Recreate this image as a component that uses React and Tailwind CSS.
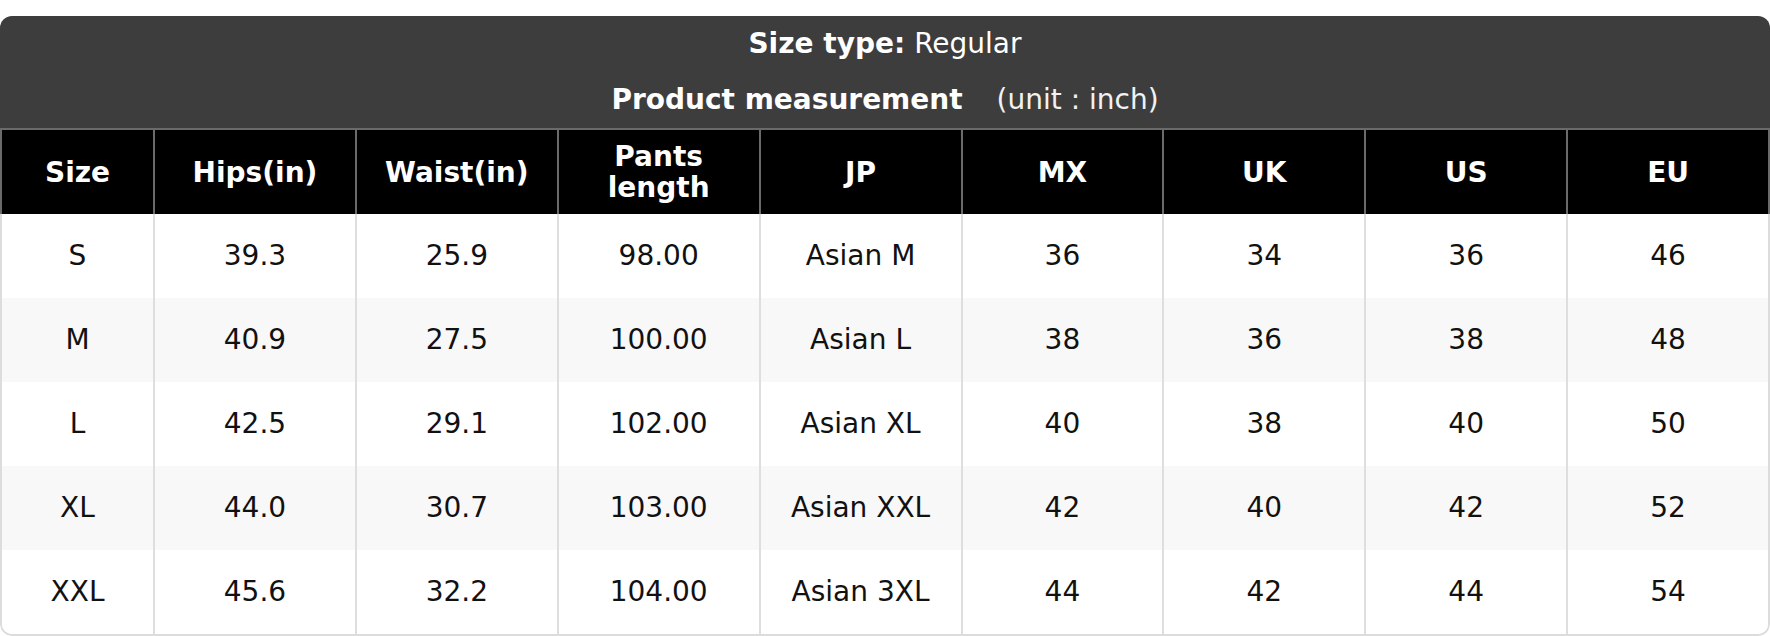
const columns = ["Size", "Hips(in)", "Waist(in)", "Pants length", "JP", "MX", "UK", "US", "EU"];

const rows = [
  ["S", "39.3", "25.9", "98.00", "Asian M", "36", "34", "36", "46"],
  ["M", "40.9", "27.5", "100.00", "Asian L", "38", "36", "38", "48"],
  ["L", "42.5", "29.1", "102.00", "Asian XL", "40", "38", "40", "50"],
  ["XL", "44.0", "30.7", "103.00", "Asian XXL", "42", "40", "42", "52"],
  ["XXL", "45.6", "32.2", "104.00", "Asian 3XL", "44", "42", "44", "54"],
];

export default function App() {
  return (
    <div
      className="w-[1770px] h-[636px] bg-white pt-4"
      style={{ fontFamily: '"DejaVu Sans", Verdana, sans-serif' }}
    >
      <div className="rounded-[12px] overflow-hidden">
        {/* Title block */}
        <div className="bg-[#3d3d3d] text-white text-[28px] text-center">
          <div className="h-[56px] flex items-center justify-center">
            <span className="font-bold">Size type:</span>
            <span className="ml-[9px]">Regular</span>
          </div>
          <div className="h-[56px] flex items-center justify-center">
            <span className="font-bold">Product measurement</span>
            <span className="ml-[34px] text-[#f2f2f2]">(unit : inch)</span>
          </div>
        </div>

        {/* Header row */}
        <div className="grid grid-cols-[151px_repeat(8,1fr)] bg-black text-white border-x-2 border-t-2 border-[#6a6a6a]">
          {columns.map((c, i) => (
            <div
              key={c}
              className={`h-[84px] px-2 flex items-center justify-center text-center text-[28px] font-bold leading-[31px] ${
                i > 0 ? "border-l-2 border-[#6a6a6a]" : ""
              }`}
            >
              {c === "Pants length" ? (
                <span>
                  Pants
                  <br />
                  length
                </span>
              ) : (
                c
              )}
            </div>
          ))}
        </div>

        {/* Body rows */}
        <div className="border-x-2 border-b-2 border-[#dcdcdc] rounded-b-[12px] overflow-hidden">
          {rows.map((r, ri) => (
            <div
              key={r[0]}
              className={`grid grid-cols-[151px_repeat(8,1fr)] ${
                ri % 2 === 1 ? "bg-[#f8f8f8]" : "bg-white"
              }`}
            >
              {r.map((v, i) => (
                <div
                  key={i}
                  className={`h-[84px] flex items-center justify-center text-[28px] text-[#111] ${
                    i > 0 ? "border-l-2 border-[#dedede]" : ""
                  }`}
                >
                  {v}
                </div>
              ))}
            </div>
          ))}
        </div>
      </div>
    </div>
  );
}
